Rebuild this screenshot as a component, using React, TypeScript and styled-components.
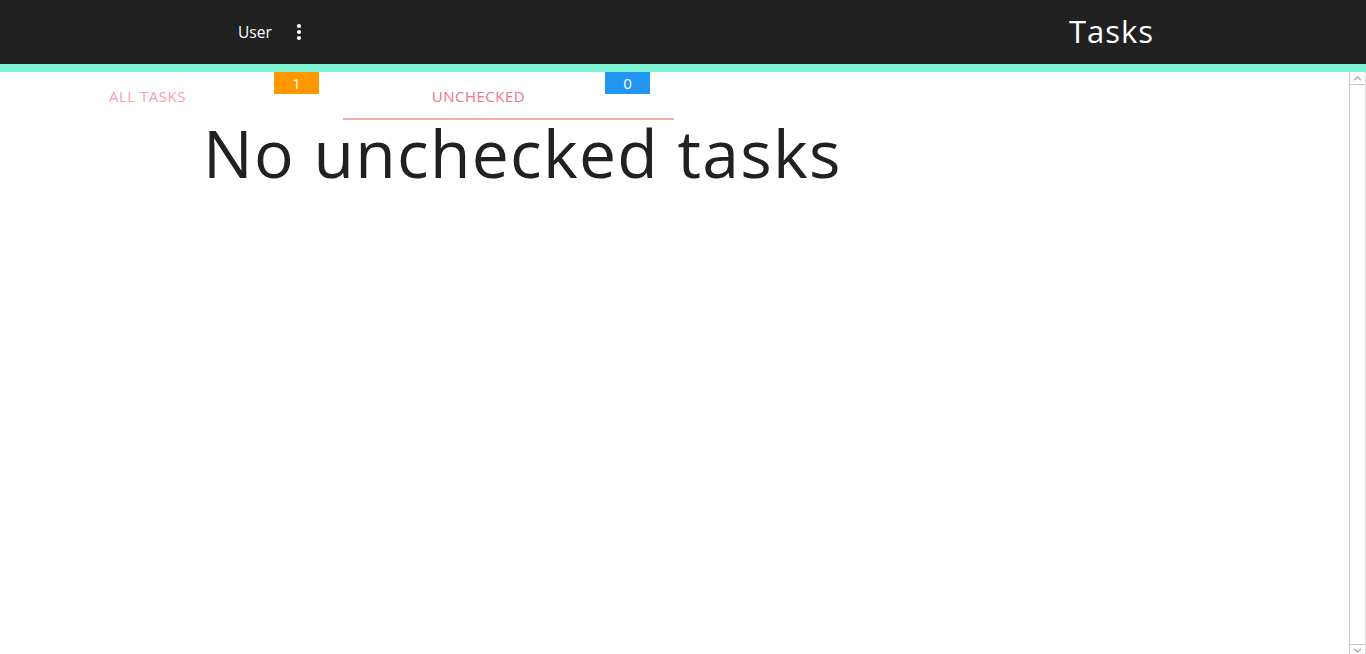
import React from "react";
import styled, { createGlobalStyle } from "styled-components";

const Global = createGlobalStyle`
  html, body { margin: 0; padding: 0; height: 100%; overflow: hidden; }
  body { font-family: "Open Sans", "Liberation Sans", sans-serif; background: #fff; }
  #root { height: 100%; }
`;

const Page = styled.div`
  display: flex;
  flex-direction: column;
  height: 654px;
`;

const Header = styled.header`
  height: 64px;
  flex: 0 0 64px;
  background: #212121;
  display: flex;
  align-items: center;
  color: #fff;
`;

const UserBox = styled.div`
  display: flex;
  align-items: center;
  padding-left: 238px;
  width: 600px;
`;

const UserName = styled.span`
  font-size: 15.5px;
  color: #fff;
`;

const MenuButton = styled.button`
  background: none;
  border: none;
  padding: 0;
  margin-left: 20px;
  width: 14px;
  height: 20px;
  display: flex;
  align-items: center;
  justify-content: center;
  cursor: pointer;
`;

const Title = styled.h1`
  margin: -2px 0 0 231px;
  font-size: 31px;
  font-weight: 400;
  color: #fff;
  letter-spacing: 1px;
`;

const Accent = styled.div`
  height: 8px;
  flex: 0 0 8px;
  background: #7ef5d2;
`;

const Body = styled.div`
  flex: 1;
  display: flex;
  min-height: 0;
`;

const Content = styled.main`
  flex: 1;
  background: #fff;
`;

const Rail = styled.div`
  width: 15px;
  flex: 0 0 15px;
  border-left: 1px solid #c6c6c6;
  border-right: 1px solid #dcdcdc;
  display: flex;
  flex-direction: column;
  justify-content: space-between;
  background: #fff;
`;

const RailButton = styled.div<{ $down?: boolean }>`
  height: ${(p) => (p.$down ? "10px" : "13px")};
  display: flex;
  align-items: ${(p) => (p.$down ? "flex-start" : "center")};
  justify-content: center;
  padding-top: ${(p) => (p.$down ? "3px" : "0")};
  box-sizing: border-box;
  border-top: ${(p) => (p.$down ? "1px solid #c6c6c6" : "none")};
  border-bottom: ${(p) => (p.$down ? "none" : "1px solid #c6c6c6")};
`;

const Tabs = styled.nav`
  display: flex;
  padding-left: 12px;
`;

const Tab = styled.div<{ $active?: boolean }>`
  position: relative;
  width: 331px;
  height: 48px;
  box-sizing: border-box;
  display: flex;
  align-items: center;
  justify-content: center;
  padding-right: 60px;
  padding-top: 1px;
  font-size: 15px;
  letter-spacing: 0.5px;
  color: ${(p) => (p.$active ? "#ee7582" : "#f4a2aa")};
  border-bottom: 2px solid ${(p) => (p.$active ? "#f4abb1" : "transparent")};
  cursor: pointer;
`;

const Badge = styled.span<{ $color: string }>`
  position: absolute;
  top: 0;
  right: 24px;
  width: 45px;
  height: 22px;
  background: ${(p) => p.$color};
  color: #fff;
  font-size: 15px;
  letter-spacing: 0;
  display: flex;
  align-items: center;
  justify-content: center;
`;

const Empty = styled.h2`
  margin: -3px 0 0;
  padding-left: 203px;
  font-size: 66px;
  font-weight: 400;
  line-height: 70px;
  color: #212121;
  letter-spacing: 1.3px;
`;

function DotsIcon() {
  return (
    <svg width="6" height="18" viewBox="0 0 6 18">
      <circle cx="3" cy="3" r="2.1" fill="#fff" />
      <circle cx="3" cy="9" r="2.1" fill="#fff" />
      <circle cx="3" cy="15" r="2.1" fill="#fff" />
    </svg>
  );
}

function Chevron({ down }: { down?: boolean }) {
  return (
    <svg width="9" height="5" viewBox="0 0 9 5">
      <path
        d={down ? "M1 0.8 L4.5 4.2 L8 0.8" : "M1 4.2 L4.5 0.8 L8 4.2"}
        fill="none"
        stroke="#a3a3a3"
        strokeWidth="1.2"
      />
    </svg>
  );
}

export default function App() {
  return (
    <>
      <Global />
      <Page>
        <Header>
          <UserBox>
            <UserName>User</UserName>
            <MenuButton aria-label="menu">
              <DotsIcon />
            </MenuButton>
          </UserBox>
          <Title>Tasks</Title>
        </Header>
        <Accent />
        <Body>
          <Content>
            <Tabs>
              <Tab>
                ALL TASKS
                <Badge $color="#ff9800">1</Badge>
              </Tab>
              <Tab $active>
                UNCHECKED
                <Badge $color="#2196f3">0</Badge>
              </Tab>
            </Tabs>
            <Empty>No unchecked tasks</Empty>
          </Content>
          <Rail>
            <RailButton>
              <Chevron />
            </RailButton>
            <RailButton $down>
              <Chevron down />
            </RailButton>
          </Rail>
        </Body>
      </Page>
    </>
  );
}
